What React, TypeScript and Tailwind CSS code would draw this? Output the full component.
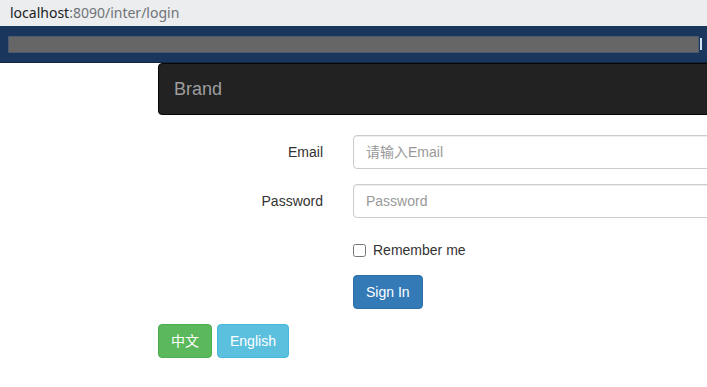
import React, { useState } from 'react';

const font = { fontFamily: '"Liberation Sans", Arial, "Noto Sans CJK SC", sans-serif' };

// Browser chrome strip (address + blurred toolbar)
const BrowserBar: React.FC = () => (
  <div>
    <div className="h-[26px] bg-[#ecedef] flex items-center pl-[10px] text-[14px] leading-none" style={{ fontFamily: '"Noto Sans", "Open Sans", sans-serif' }}>
      <span className="text-[#202124]">localhost</span>
      <span className="text-[#6f7377]">:8090/inter/login</span>
    </div>
    <div className="h-[37px] bg-[#1b365d] flex items-center pl-[8px] pr-[5px] border-b border-[#10243f]">
      <div className="h-[17px] flex-1 bg-[#666666] border border-[#4a5a70]" />
      <div className="w-[2px] h-[12px] ml-[1px] bg-[#cfe3f5]" />
    </div>
  </div>
);

const App: React.FC = () => {
  const [email, setEmail] = useState('');
  const [password, setPassword] = useState('');
  const [remember, setRemember] = useState(false);

  return (
    <div className="w-[707px] h-[387px] bg-white overflow-hidden text-[14px] text-[#333]" style={font}>
      <BrowserBar />
      <div className="pl-[158px]">
        <div className="h-[52px] bg-[#222] border border-[#080808] rounded-l-[4px] flex items-center pl-[15px] -mr-[10px]">
          <span className="text-[18px] text-[#9d9d9d]">Brand</span>
        </div>

        <form className="mt-[20px]" onSubmit={e => e.preventDefault()}>
          <div className="flex items-center mb-[15px]">
            <label className="w-[165px] text-right">Email</label>
            <input
              value={email}
              onChange={e => setEmail(e.target.value)}
              placeholder="请输入Email"
              className="ml-[30px] h-[34px] flex-1 -mr-[10px] border border-[#ccc] rounded-[4px] px-[12px] text-[14px] placeholder:text-[#999] shadow-[inset_0_1px_1px_rgba(0,0,0,0.075)] outline-none"
            />
          </div>
          <div className="flex items-center mb-[15px]">
            <label className="w-[165px] text-right">Password</label>
            <input
              type="password"
              value={password}
              onChange={e => setPassword(e.target.value)}
              placeholder="Password"
              className="ml-[30px] h-[34px] flex-1 -mr-[10px] border border-[#ccc] rounded-[4px] px-[12px] text-[14px] placeholder:text-[#999] shadow-[inset_0_1px_1px_rgba(0,0,0,0.075)] outline-none"
            />
          </div>
          <div className="pl-[195px] pt-[7px] h-[42px] flex items-start">
            <label className="flex items-center gap-[7px] leading-[20px]">
              <input
                type="checkbox"
                checked={remember}
                onChange={e => setRemember(e.target.checked)}
                className="w-[13px] h-[13px] m-0"
              />
              <span>Remember me</span>
            </label>
          </div>
          <div className="pl-[195px]">
            <button className="h-[34px] px-[12px] bg-[#337ab7] border border-[#2e6da4] rounded-[4px] text-white">Sign In</button>
          </div>
        </form>

        <div className="flex gap-[5px] mt-[15px]">
          <button className="h-[34px] px-[12px] bg-[#5cb85c] border border-[#4cae4c] rounded-[4px] text-white">中文</button>
          <button className="h-[34px] px-[12px] bg-[#5bc0de] border border-[#46b8da] rounded-[4px] text-white">English</button>
        </div>
      </div>
    </div>
  );
};

export default App;
